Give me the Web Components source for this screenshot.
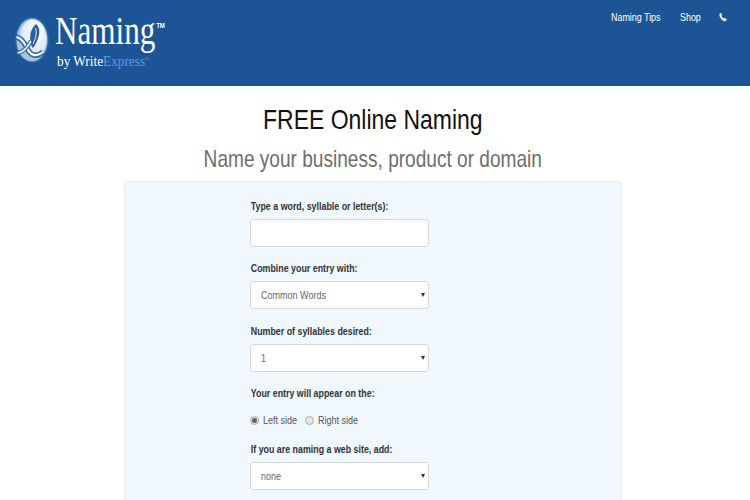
<!DOCTYPE html>
<html><head><meta charset="utf-8"><style>
html,body{margin:0;padding:0;height:500px;overflow:hidden;background:#fff;font-family:"Liberation Sans",Arial,sans-serif}
</style></head><body>
<site-header></site-header>
<page-title></page-title>
<naming-panel>
<form-field label="Type a word, syllable or letter(s):"><text-box></text-box></form-field>
<form-field label="Combine your entry with:"><select-box value="Common Words"></select-box></form-field>
<form-field label="Number of syllables desired:"><select-box value="1"></select-box></form-field>
<form-field label="Your entry will appear on the:"><radio-row></radio-row></form-field>
<form-field label="If you are naming a web site, add:"><select-box value="none"></select-box></form-field>
</naming-panel>
<script>
function def(name,html){customElements.define(name,class extends HTMLElement{connectedCallback(){if(this.shadowRoot)return;const r=this.attachShadow({mode:'open'});r.innerHTML=typeof html==='function'?html(this):html;}});}
def('site-header',`<style>
:host{display:flex;height:86px;background:#1c5596;box-sizing:border-box;justify-content:space-between;color:#fff}
.logo{display:flex;padding:17px 0 0 15px;gap:6px;align-items:flex-start}
.txt{display:flex;flex-direction:column;font-family:"Liberation Serif",serif;width:110px;white-space:nowrap}
.n{font-size:41px;line-height:38px;display:flex;transform:scaleX(.76);transform-origin:0 0;height:34px;margin-top:-6px}
.n sup{font:bold 8px/1 "Liberation Sans",sans-serif;margin:11px 0 0 1px}
.by{font-size:15px;line-height:18px;margin:7px 0 0 2px;transform:scaleX(.885);transform-origin:0 0}
.by b{font-weight:400;color:#5b9ae6}.by sup{font-size:6px;color:#5b9ae6;vertical-align:5px;line-height:0}
nav{display:flex;font-size:11px;padding:11px 23px 0 0;align-items:flex-start;line-height:13px}
nav span{display:block;white-space:nowrap;transform:scaleX(.81);transform-origin:0 0}
.a{width:69px}.b{width:39px}
svg{display:block}
</style>
<div class="logo">
<svg width="34" height="46" viewBox="0 0 34 46"><defs><radialGradient id="g" cx=".6" cy=".3" r=".85"><stop offset="0" stop-color="#fff"/><stop offset=".6" stop-color="#dfe8f3"/><stop offset="1" stop-color="#7ea3cc"/></radialGradient></defs>
<ellipse cx="17" cy="23" rx="17" ry="23" fill="#2f68a8"/>
<ellipse cx="17" cy="23" rx="15.5" ry="21.5" fill="#a9c3e0"/>
<ellipse cx="18" cy="22" rx="13.5" ry="19.5" fill="url(#g)"/>
<path d="M21 7 C26 11 25 19 20 28 L18 31 L17 30 C14 24 14 13 21 7Z" fill="#2d5f9b"/>
<path d="M20.5 11 C22 15 21 21 18 27" fill="none" stroke="#e8eff7" stroke-width="1"/>
<path d="M1 20 C6 21 9 25 12 31 C15 38 21 41 28 35" fill="none" stroke="#2f68a8" stroke-width="5.5"/>
<path d="M1.5 20 C6 21 9 25 12 31 C15 38 21 41 28 35" fill="none" stroke="#fff" stroke-width="2.2"/>
<path d="M2 36 C7 36 12 31 16 24" fill="none" stroke="#2f68a8" stroke-width="4"/>
<path d="M2.5 36 C7 36 12 31 16 24" fill="none" stroke="#e8eff7" stroke-width="1.6"/></svg>
<div class="txt"><div class="n">Naming<sup>TM</sup></div><div class="by">by Write<b>Express</b><sup>®</sup></div></div></div>
<nav><span class="a">Naming Tips</span><span class="b">Shop</span><svg width="8" height="10" viewBox="0 0 9 10" style="margin-top:1px"><path d="M1.8.6 3.2 3 2.4 4C2.8 5.3 3.8 6.4 5 7L6.1 6.2 8.5 7.8C8.1 9 7.2 9.6 6.2 9.4 3 8.7.9 5.6.8 2.6.8 1.6 1.1 1 1.8.6Z" fill="#fff" stroke="#fff" stroke-width=".6"/></svg></nav>`);
def('page-title',`<style>
:host{display:flex;flex-direction:column;align-items:center;height:95px;white-space:nowrap}
h1{margin:18px 0 0;font-size:28px;line-height:32px;font-weight:400;color:#111;transform:translateX(-2px) scaleX(.82)}
h2{margin:9px 0 0;font-size:24px;line-height:28px;font-weight:400;color:#6e6e6e;transform:translateX(-2px) scaleX(.795)}
</style><h1>FREE Online Naming</h1><h2>Name your business, product or domain</h2>`);
def('naming-panel',`<style>
:host{display:block;width:498px;height:330px;margin-left:124px;box-sizing:border-box;background:#f0f7fd;border:1px solid #e6ebef;border-radius:3px;padding:18px 0 0 125px}
.c{width:179px;display:flex;flex-direction:column;gap:15.34px}
</style><div class="c"><slot></slot></div>`);
def('form-field',h=>`<style>
:host{display:block}
label{display:block;font-size:11.5px;font-weight:700;line-height:13px;color:#333;margin-bottom:6px;padding-left:1px;white-space:nowrap;transform:scaleX(.77);transform-origin:0 0}
</style><label>${h.getAttribute('label')}</label><slot></slot>`);
const box=`box-sizing:border-box;height:28px;background:#fff;border:1px solid #d6d9dc;border-radius:3px;`;
def('text-box',`<style>:host{display:block;${box}}</style>`);
def('select-box',h=>`<style>:host{display:flex;align-items:center;justify-content:space-between;${box}padding:0 3px 0 10px;font-size:11px;color:#666}
span{transform:scaleX(.82);transform-origin:0 50%;white-space:nowrap}
i{width:0;height:0;border:2.5px solid transparent;border-top:4px solid #333;border-bottom:0}</style><span>${h.getAttribute('value')}</span><i></i>`);
def('radio-row',`<style>:host{display:flex;align-items:center;height:15px;font-size:11px;color:#555;margin:12.6px 0 0}
.r{flex:none;box-sizing:border-box;width:9px;height:9px;border-radius:50%;border:1px solid #aaa;background:#e6e6e6;display:flex;align-items:center;justify-content:center}
.r.on::after{content:"";width:5px;height:5px;border-radius:50%;background:#666}
.t{white-space:nowrap;transform:scaleX(.82);transform-origin:0 50%;margin-left:4px}
.l{width:34px}.rr{width:40px}</style><span class="r on"></span><span class="t l">Left side</span><span class="r" style="margin-left:8px"></span><span class="t rr">Right side</span>`);
</script>
</body></html>
